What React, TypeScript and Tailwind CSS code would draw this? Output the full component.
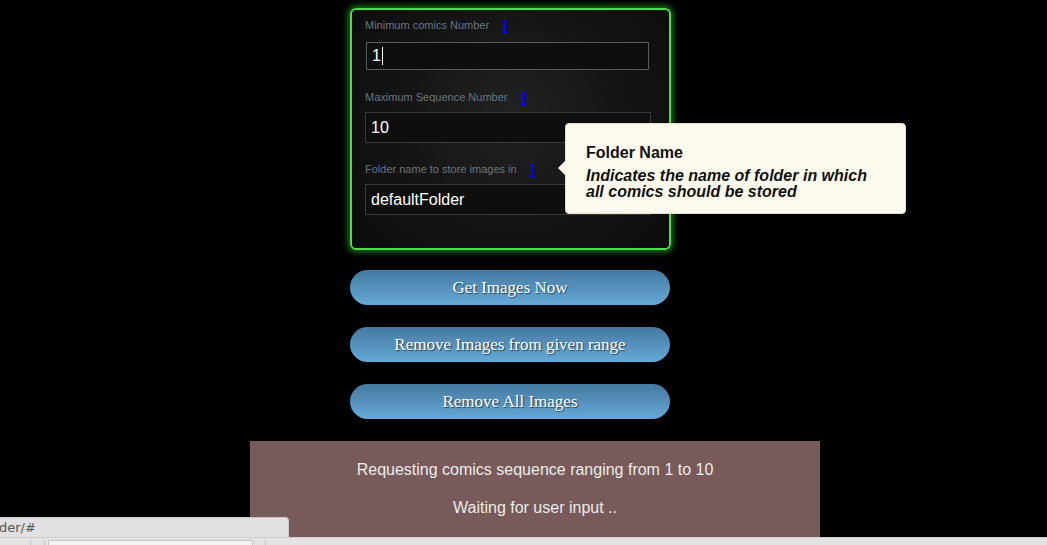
import React from 'react';

const sans = { fontFamily: '"Liberation Sans", Arial, sans-serif' };

function InfoLink() {
    return (
        <a href="#" className="ml-[14px] text-[17px] font-bold text-[#0000f0] underline leading-none">
            i
        </a>
    );
}

function Field({ label, value, focused }: { label: string; value: string; focused?: boolean }) {
    return (
        <div className="flex flex-col">
            <div className="flex items-center h-[14px] text-[11px] text-[#6c7480]">
                <span>{label}</span>
                <InfoLink />
            </div>
            {focused ? (
                <div className="mt-[10px] mb-[1px] mx-[1px] h-[28px] w-[283px] border border-[#5a5a5a] bg-[#0e0e0e] flex items-center pl-[5px] text-[16px] text-white">
                    <span>{value}</span>
                    <span className="ml-[1px] w-[1px] h-[18px] bg-white" />
                </div>
            ) : (
                <div className="mt-[8px] h-[31px] w-[286px] border border-[#3a3a3a] bg-[#0e0e0e] flex items-center pl-[5px] text-[16px] text-white">
                    {value}
                </div>
            )}
        </div>
    );
}

function Tooltip() {
    return (
        <div className="absolute left-[213px] top-[113px] w-[341px] h-[91px] rounded-[4px] border border-[#e8dfc8] bg-[#fffaee] pl-[20px] pt-[19px] text-[#111]">
            <div className="absolute -left-[8px] top-[36px] w-0 h-0 border-y-[8px] border-y-transparent border-r-[8px] border-r-[#fffaee]" />
            <div className="text-[16px] font-bold leading-[20px]">Folder Name</div>
            <div className="mt-[5px] w-[300px] text-[16px] font-bold italic leading-[16px]">
                Indicates the name of folder in which all comics should be stored
            </div>
        </div>
    );
}

function BlueButton({ children }: { children: React.ReactNode }) {
    return (
        <button
            className="w-[320px] h-[35px] rounded-full bg-gradient-to-b from-[#4579a0] to-[#66a9d8] text-white text-[17px] [text-shadow:1px_1px_1px_rgba(0,0,0,0.6)]"
            style={{ fontFamily: '"Liberation Serif", Georgia, serif' }}
        >
            {children}
        </button>
    );
}

export default function App() {
    return (
        <div className="relative w-[1047px] h-[545px] overflow-hidden bg-black" style={sans}>
            <div className="flex flex-col pt-[8px]">
                <div className="relative ml-[350px] w-[321px] h-[242px] rounded-[6px] border-2 border-[#4cdc4c] shadow-[0_0_6px_2px_rgba(60,220,60,0.55)] bg-[radial-gradient(circle_at_50%_45%,#222_0%,#141414_55%,#0c0c0c_100%)] pl-[13px] pt-[8px] flex flex-col gap-[19px]">
                    <Field label="Minimum comics Number" value="1" focused />
                    <Field label="Maximum Sequence Number" value="10" />
                    <Field label="Folder name to store images in" value="defaultFolder" />
                    <Tooltip />
                </div>

                <div className="ml-[350px] mt-[20px] flex flex-col gap-[22px]">
                    <BlueButton>Get Images Now</BlueButton>
                    <BlueButton>Remove Images from given range</BlueButton>
                    <BlueButton>Remove All Images</BlueButton>
                </div>

                <div className="ml-[250px] mt-[22px] w-[570px] h-[110px] bg-[#775a59] flex flex-col items-center pt-[20px] gap-[20px] text-[16px] leading-[18px] text-[#ececec]">
                    <p>Requesting comics sequence ranging from 1 to 10</p>
                    <p>Waiting for user input ..</p>
                </div>
            </div>

            {/* browser status bubble + bottom bar */}
            <div className="absolute left-0 top-[517px] w-[289px] h-[21px] rounded-tr-[4px] border-t border-r border-[#c8c8c8] bg-[#e1e1e1] flex items-center text-[13px] text-[#555]" style={{ fontFamily: '"DejaVu Sans", sans-serif' }}>
                <span className="-ml-[1px]">der/#</span>
            </div>
            <div className="absolute left-0 top-[537px] w-full h-[8px] border-t border-[#cfcfcf] bg-[#e3e3e3] flex items-start">
                <div className="mt-[2px] w-[31px] h-[6px] border-r border-[#c4c4c4]" />
                <div className="mt-[2px] ml-[1px] w-[13px] h-[6px] border-r border-[#c4c4c4]" />
                <div className="mt-[2px] ml-[3px] w-[205px] h-[6px] rounded-t-[2px] border-t border-x border-[#c4c4c4] bg-[#f2f2f2]" />
                <div className="mt-[2px] w-[13px] h-[6px] border-r border-[#c4c4c4]" />
            </div>
        </div>
    );
}
